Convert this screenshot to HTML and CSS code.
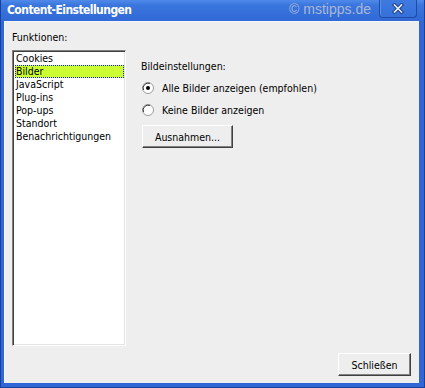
FILE: index.html
```html
<!DOCTYPE html>
<html lang="de">
<head>
    <meta charset="UTF-8">
    <title>Content-Einstellungen</title>
    <link rel="stylesheet" href="styles.css">
</head>
<body>
    <div class="window">
        <div class="titlebar">
            <span class="title">Content-Einstellungen</span>
            <span class="watermark">© mstipps.de</span>
            <div class="close-btn">
                <svg width="14" height="12" viewBox="0 0 14 12">
                    <path d="M3.5 2 L10.5 9 M10.5 2 L3.5 9" stroke="#1b3f8f" stroke-width="3.6" stroke-linecap="square"/>
                    <path d="M3.5 2 L10.5 9 M10.5 2 L3.5 9" stroke="#e8eef8" stroke-width="1.6" stroke-linecap="square"/>
                </svg>
            </div>
        </div>

        <div class="client">
            <div class="main">
                <div class="functions">
                    <div class="label">Funktionen:</div>
                    <ul class="list">
                        <li>Cookies</li>
                        <li class="selected">Bilder</li>
                        <li>JavaScript</li>
                        <li>Plug-ins</li>
                        <li>Pop-ups</li>
                        <li>Standort</li>
                        <li>Benachrichtigungen</li>
                    </ul>
                </div>

                <div class="settings">
                    <div class="label">Bildeinstellungen:</div>
                    <div class="radio-row">
                        <span class="radio">
                            <svg width="12" height="12" viewBox="0 0 12 12">
                                <circle cx="6" cy="6" r="5.5" fill="#ffffff" stroke="#9a9a9a"/>
                                <path d="M1.5 8 A5 5 0 0 1 8 1.5" fill="none" stroke="#404040" stroke-width="1"/>
                                <circle cx="6" cy="6" r="2" fill="#000000"/>
                            </svg>
                        </span>
                        <span>Alle Bilder anzeigen (empfohlen)</span>
                    </div>
                    <div class="radio-row">
                        <span class="radio">
                            <svg width="12" height="12" viewBox="0 0 12 12">
                                <circle cx="6" cy="6" r="5.5" fill="#ffffff" stroke="#9a9a9a"/>
                                <path d="M1.5 8 A5 5 0 0 1 8 1.5" fill="none" stroke="#404040" stroke-width="1"/>
                            </svg>
                        </span>
                        <span>Keine Bilder anzeigen</span>
                    </div>
                    <button class="btn btn-exceptions">Ausnahmen...</button>
                </div>
            </div>

            <div class="footer">
                <button class="btn btn-close">Schließen</button>
            </div>
        </div>
    </div>
</body>
</html>
```

FILE: styles.css
```css
* {
    margin: 0;
    padding: 0;
    box-sizing: border-box;
}

body {
    font-family: 'DejaVu Sans Condensed', 'Liberation Sans', sans-serif;
    font-size: 10.5px;
    color: #000;
    background: #fff;
}

.window {
    width: 425px;
    height: 388px;
    display: flex;
    flex-direction: column;
    background: #2f68d6;
    border: 1px solid #1c3f97;
    border-top: none;
}

.titlebar {
    height: 21px;
    display: flex;
    align-items: flex-start;
    padding-left: 6px;
    background: linear-gradient(#4f8aea, #3a75dd 25%, #3169d6);
}

.title {
    color: #fff;
    font-weight: bold;
    font-size: 12px;
    letter-spacing: -0.55px;
    line-height: 21px;
}

.watermark {
    margin-left: auto;
    margin-right: 8px;
    font-family: 'Liberation Sans', sans-serif;
    font-size: 14px;
    line-height: 19px;
    color: #a8b8d8;
}

.close-btn {
    width: 38px;
    height: 18px;
    margin-right: 7px;
    display: flex;
    align-items: center;
    justify-content: center;
    border: 1px solid #1f4aa6;
    border-top: none;
    border-radius: 0 0 4px 4px;
    background: linear-gradient(#3f7ae0, #3570da);
    box-shadow: inset 1px 0 0 #5a8fe6;
}

.client {
    flex: 1;
    margin: 0 5px 4px 3px;
    background: #eeeeee;
    border-top: 1px solid #f6f6f6;
    border-left: 1px solid #f6f6f6;
    display: flex;
    flex-direction: column;
}

.main {
    display: flex;
    gap: 15px;
    padding: 9px 0 0 7px;
}

.label {
    height: 13px;
    line-height: 13px;
}

.functions .label {
    margin-bottom: 6px;
}

.list {
    list-style: none;
    width: 114px;
    height: 296px;
    background: #fff;
    border: 1px solid;
    border-color: #808080 #fff #fff #808080;
    box-shadow: inset 1px 1px 0 #404040, inset -1px -1px 0 #e4e4e4;
    padding: 1px 1px 0 2px;
}

.list li {
    height: 13px;
    line-height: 13px;
    padding-left: 1px;
}

.list li.selected {
    background: #ccff33;
    outline: 1px dotted #2020e0;
    outline-offset: -1px;
}

.settings {
    padding-top: 29px;
}

.settings .label {
    margin-bottom: 8px;
}

.radio-row {
    display: flex;
    align-items: center;
    gap: 8px;
    height: 13px;
    margin-bottom: 9px;
    padding-left: 1px;
}

.radio {
    display: flex;
    width: 12px;
    height: 12px;
}

.btn {
    font-family: inherit;
    font-size: 10.5px;
    height: 23px;
    background: #eeeeee;
    border: 1px solid;
    border-color: #fff #404040 #404040 #fff;
    box-shadow: inset -1px -1px 0 #808080;
}

.btn-exceptions {
    width: 91px;
    margin-left: 1px;
}

.footer {
    margin-top: auto;
    display: flex;
    justify-content: flex-end;
    padding: 0 8px 7px 0;
}

.btn-close {
    width: 73px;
}
```
